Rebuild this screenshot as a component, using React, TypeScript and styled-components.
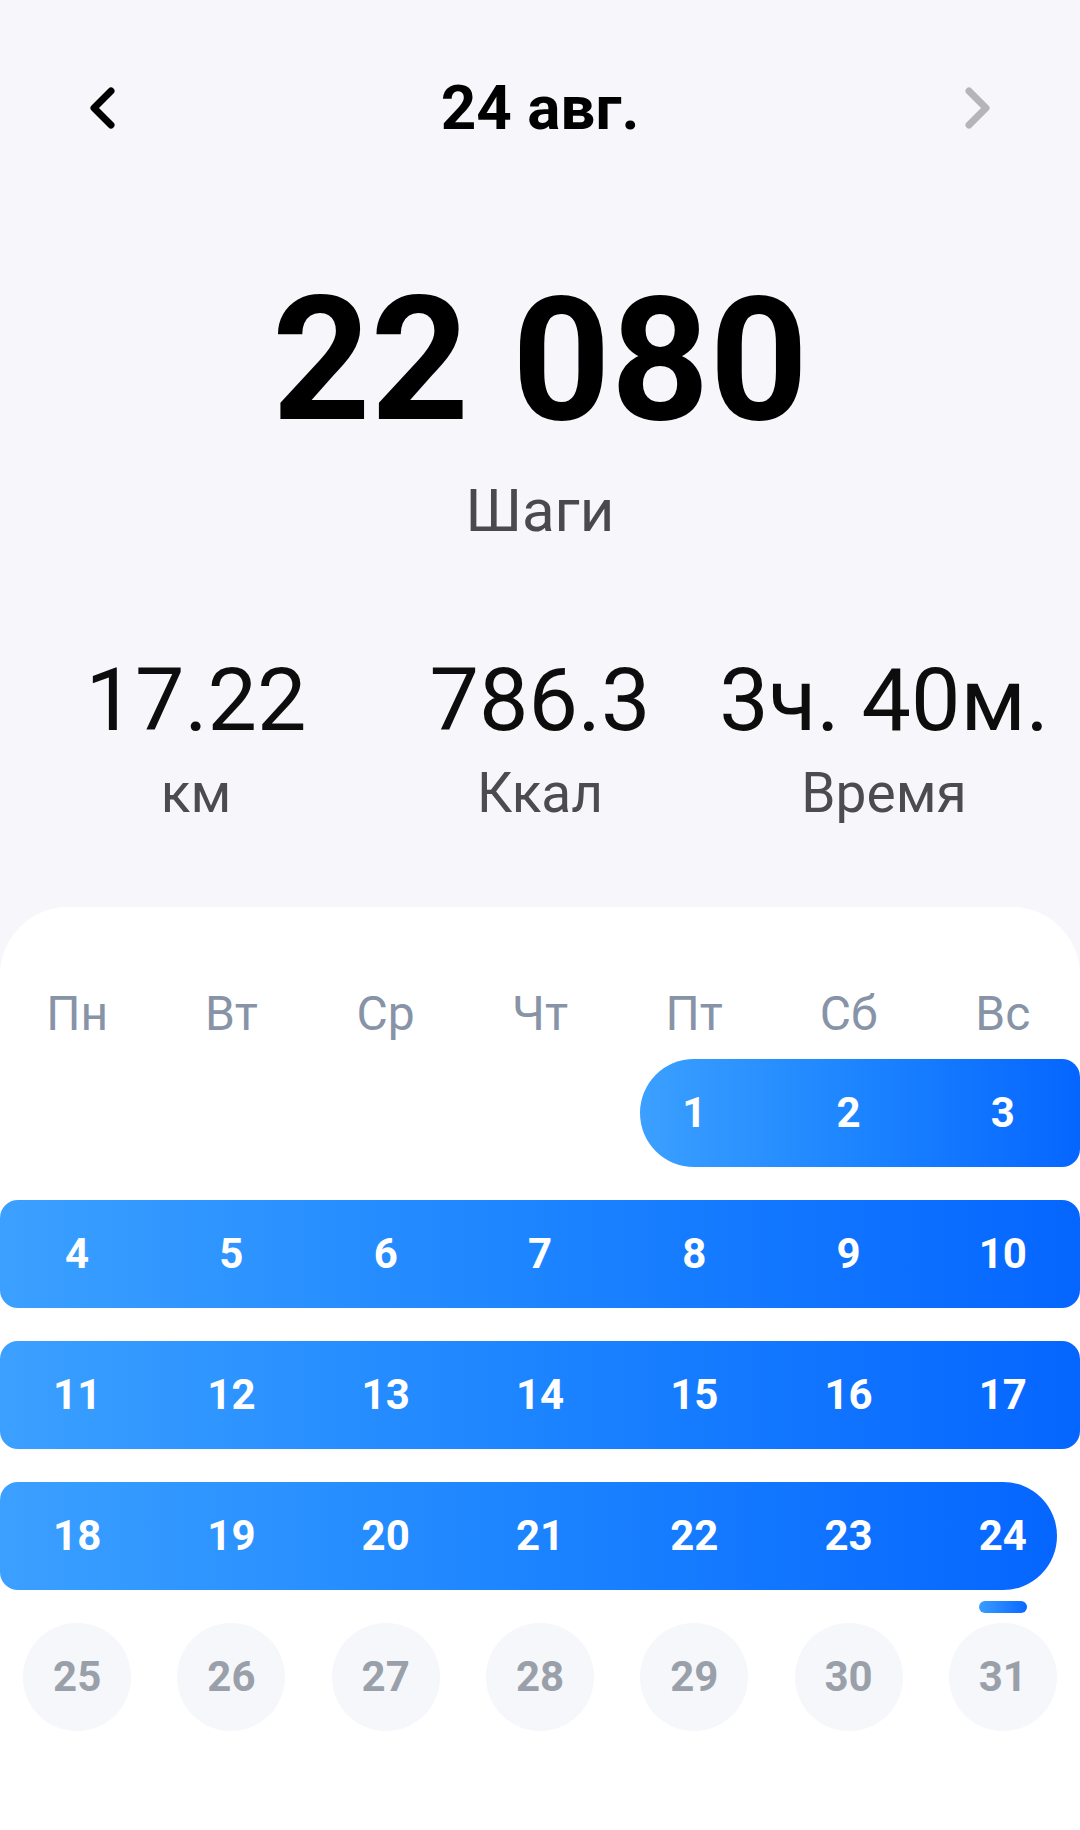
import React from 'react';
import styled, { createGlobalStyle } from 'styled-components';

const GlobalStyle = createGlobalStyle`
  html, body {
    margin: 0;
    padding: 0;
    background: #f7f7fb;
  }
  body {
    font-family: Roboto, "Noto Sans", "Liberation Sans", sans-serif;
    -webkit-font-smoothing: antialiased;
  }
  * { box-sizing: border-box; }
`;

const Screen = styled.div`
  min-height: 1830px;
  display: flex;
  flex-direction: column;
  background: #f7f7fb;
`;

const Header = styled.header`
  margin-top: 64px;
  height: 88px;
  padding: 0 87px 0 87px;
  display: flex;
  align-items: center;
  justify-content: space-between;
`;

const NavButton = styled.button<{ $muted?: boolean }>`
  width: 30px;
  height: 48px;
  padding: 0;
  border: 0;
  background: transparent;
  color: ${(p) => (p.$muted ? '#b4b4b9' : '#000000')};
  display: flex;
  align-items: center;
  justify-content: center;
  cursor: pointer;
`;

const Title = styled.h1`
  margin: 0;
  font-size: 62px;
  line-height: 88px;
  font-weight: 700;
  color: #000;
`;

const Hero = styled.section`
  display: flex;
  flex-direction: column;
  align-items: center;
  margin-top: 122px;
`;

const StepsValue = styled.div`
  font-size: 172px;
  line-height: 172px;
  font-weight: 700;
  color: #000;
`;

const StepsLabel = styled.div`
  margin-top: 35px;
  font-size: 60px;
  line-height: 60px;
  color: #4a4a4e;
`;

const Stats = styled.section`
  margin-top: 115px;
  padding: 0 24px;
  display: grid;
  grid-template-columns: repeat(3, 1fr);
`;

const Stat = styled.div`
  display: flex;
  flex-direction: column;
  align-items: center;
  white-space: nowrap;
`;

const StatValue = styled.div`
  font-size: 88px;
  line-height: 88px;
  color: #0d0d0d;
`;

const StatLabel = styled.div`
  margin-top: 22px;
  font-size: 55px;
  line-height: 55px;
  color: #4b4b50;
`;

const Card = styled.section`
  margin-top: 86px;
  flex: 1;
  background: #ffffff;
  border-radius: 68px 68px 0 0;
  padding-top: 83px;
`;

const WeekHeader = styled.div`
  display: grid;
  grid-template-columns: repeat(7, 1fr);
`;

const WeekdayName = styled.div`
  text-align: center;
  font-size: 48px;
  line-height: 48px;
  color: #8793a6;
`;

const Weeks = styled.div`
  margin-top: 21px;
  display: flex;
  flex-direction: column;
  gap: 33px;
`;

const WeekRow = styled.div`
  display: grid;
  grid-template-columns: repeat(7, 1fr);
  height: 108px;
`;

const Band = styled.div<{ $roundStart: boolean; $roundEnd: boolean }>`
  grid-row: 1;
  height: 108px;
  margin-left: ${(p) => (p.$roundStart ? '23px' : '0')};
  margin-right: ${(p) => (p.$roundEnd ? '23px' : '0')};
  border-radius: ${(p) =>
    `${p.$roundStart ? '54px' : '18px'} ${p.$roundEnd ? '54px' : '18px'} ${
      p.$roundEnd ? '54px' : '18px'
    } ${p.$roundStart ? '54px' : '18px'}`};
  background: linear-gradient(90deg, #3ba0ff 0%, #1c84ff 50%, #0566ff 100%);
`;

const DayCell = styled.div<{ $selected: boolean }>`
  grid-row: 1;
  position: relative;
  z-index: 1;
  display: flex;
  align-items: center;
  justify-content: center;
  font-size: 42px;
  line-height: 42px;
  font-weight: 700;
  color: ${(p) => (p.$selected ? '#ffffff' : '#9aa0aa')};
`;

const Bubble = styled.div`
  width: 108px;
  height: 108px;
  border-radius: 50%;
  background: #f6f7fa;
  display: flex;
  align-items: center;
  justify-content: center;
`;

const TodayMark = styled.span`
  position: absolute;
  left: 50%;
  bottom: -23px;
  width: 48px;
  height: 12px;
  margin-left: -24px;
  border-radius: 6px;
  background: linear-gradient(90deg, #3a9cff 0%, #0a69ff 100%);
`;

const Chevron = ({ dir }: { dir: 'left' | 'right' }) => (
  <svg width="30" height="48" viewBox="0 0 30 48" fill="none">
    <path
      d={dir === 'left' ? 'M24 7 L7 24 L24 41' : 'M6 7 L23 24 L6 41'}
      stroke="currentColor"
      strokeWidth="7"
      strokeLinecap="round"
      strokeLinejoin="round"
    />
  </svg>
);

const weekdays = ['Пн', 'Вт', 'Ср', 'Чт', 'Пт', 'Сб', 'Вс'];

const weeks: (number | null)[][] = [
  [null, null, null, null, 1, 2, 3],
  [4, 5, 6, 7, 8, 9, 10],
  [11, 12, 13, 14, 15, 16, 17],
  [18, 19, 20, 21, 22, 23, 24],
  [25, 26, 27, 28, 29, 30, 31],
];

const rangeStart = 1;
const rangeEnd = 24;
const today = 24;

const stats = [
  { value: '17.22', label: 'км' },
  { value: '786.3', label: 'Ккал' },
  { value: '3ч. 40м.', label: 'Время' },
];

export default function App() {
  return (
    <>
      <GlobalStyle />
      <Screen>
        <Header>
          <NavButton aria-label="Назад">
            <Chevron dir="left" />
          </NavButton>
          <Title>24 авг.</Title>
          <NavButton $muted aria-label="Вперёд">
            <Chevron dir="right" />
          </NavButton>
        </Header>

        <Hero>
          <StepsValue>22 080</StepsValue>
          <StepsLabel>Шаги</StepsLabel>
        </Hero>

        <Stats>
          {stats.map((s) => (
            <Stat key={s.label}>
              <StatValue>{s.value}</StatValue>
              <StatLabel>{s.label}</StatLabel>
            </Stat>
          ))}
        </Stats>

        <Card>
          <WeekHeader>
            {weekdays.map((d) => (
              <WeekdayName key={d}>{d}</WeekdayName>
            ))}
          </WeekHeader>
          <Weeks>
            {weeks.map((week, wi) => {
              const selIdx = week
                .map((d, i) => (d !== null && d >= rangeStart && d <= rangeEnd ? i : -1))
                .filter((i) => i >= 0);
              const first = selIdx.length ? selIdx[0] : -1;
              const last = selIdx.length ? selIdx[selIdx.length - 1] : -1;
              return (
                <WeekRow key={wi}>
                  {selIdx.length > 0 && (
                    <Band
                      style={{ gridColumn: `${first + 1} / ${last + 2}` }}
                      $roundStart={week[first] === rangeStart}
                      $roundEnd={week[last] === rangeEnd}
                    />
                  )}
                  {week.map((d, i) => {
                    if (d === null) return <DayCell key={i} $selected={false} style={{ gridColumn: i + 1 }} />;
                    const selected = d >= rangeStart && d <= rangeEnd;
                    return (
                      <DayCell key={i} $selected={selected} style={{ gridColumn: i + 1 }}>
                        {selected ? d : <Bubble>{d}</Bubble>}
                        {d === today && <TodayMark />}
                      </DayCell>
                    );
                  })}
                </WeekRow>
              );
            })}
          </Weeks>
        </Card>
      </Screen>
    </>
  );
}
